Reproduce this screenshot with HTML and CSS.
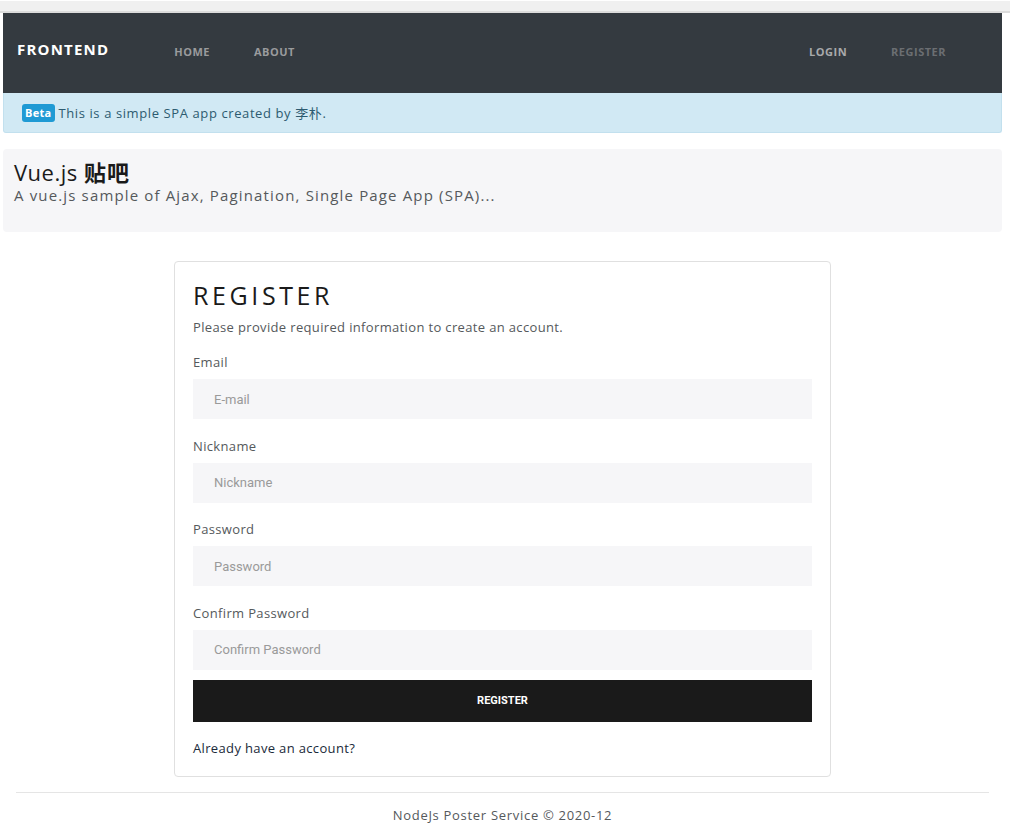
FILE: index.html
```html
<!DOCTYPE html>
<html>
<head>
<meta charset="utf-8">
<link rel="stylesheet" href="styles.css">
</head>
<body>
<div class="topstrip"></div>
<div class="page">
  <nav class="navbar">
    <a class="brand">FRONTEND</a>
    <div class="nav-left">
      <a class="nav-link">HOME</a>
      <a class="nav-link">ABOUT</a>
    </div>
    <div class="nav-right">
      <a class="nav-link login">LOGIN</a>
      <a class="nav-link active">REGISTER</a>
    </div>
  </nav>
  <div class="alert"><span class="badge">Beta</span> This is a simple SPA app created by 李朴.</div>
  <div class="jumbo">
    <h1 class="jumbo-title">Vue.js <b>贴吧</b></h1>
    <p class="jumbo-sub">A vue.js sample of Ajax, Pagination, Single Page App (SPA)...</p>
  </div>
  <div class="card-wrap">
    <div class="card">
      <h2 class="card-title">REGISTER</h2>
      <p class="card-sub">Please provide required information to create an account.</p>
      <label class="field">
        <span class="label">Email</span>
        <input class="input" placeholder="E-mail">
      </label>
      <label class="field">
        <span class="label">Nickname</span>
        <input class="input" placeholder="Nickname">
      </label>
      <label class="field">
        <span class="label">Password</span>
        <input class="input" type="password" placeholder="Password">
      </label>
      <label class="field">
        <span class="label">Confirm Password</span>
        <input class="input" type="password" placeholder="Confirm Password">
      </label>
      <button class="btn">REGISTER</button>
      <a class="already">Already have an account?</a>
    </div>
  </div>
  <footer class="footer">NodeJs Poster Service © 2020-12</footer>
</div>
</body>
</html>
```
FILE: styles.css
```css
* { box-sizing: border-box; }
html, body { margin: 0; padding: 0; background: #fff; }
body {
  font-family: "Open Sans", "Noto Sans CJK SC", sans-serif;
  color: #55595c;
}
.topstrip {
  height: 12px;
  margin-top: 1px;
  width: 1010px;
  background: #f0f0f0;
  border-bottom: 2px solid #dcdcdc;
}
.page {
  width: 999px;
  margin-left: 3px;
}
.navbar {
  height: 80px;
  background: #343a40;
  display: flex;
  align-items: center;
  padding: 0 14px;
}
.brand {
  font-weight: 700;
  font-size: 15px;
  letter-spacing: 1.2px;
  color: #fff;
  margin-top: -9px;
}
.nav-left { display: flex; gap: 44px; margin-left: 65px; margin-top: -4px; }
.nav-right { display: flex; gap: 44px; margin-left: auto; margin-right: 42px; margin-top: -4px; }
.nav-link {
  font-size: 11px;
  font-weight: 700;
  letter-spacing: 0.5px;
  color: #9a9b9d;
}
.nav-link.login { color: #a8a9ab; }
.nav-link.active { color: #6b6e72; }
.alert {
  height: 40px;
  background: #d1e9f4;
  border: 1px solid #c2e0ee;
  border-top: none;
  border-radius: 0 0 3px 3px;
  display: flex;
  align-items: center;
  padding-left: 18px;
  font-size: 13px;
  color: #2d5b70;
  letter-spacing: 0.6px;
  white-space: pre;
}
.badge {
  background: #1f9ad4;
  color: #fff;
  font-weight: 700;
  font-size: 11px;
  padding: 1px 3px 2px;
  border-radius: 3px;
  letter-spacing: 0.3px;
}
.jumbo {
  margin-top: 16px;
  height: 83px;
  background: #f6f6f8;
  border-radius: 4px;
  padding: 9px 11px;
}
.jumbo-title {
  margin: 0;
  font-size: 22px;
  font-weight: 400;
  color: #1a1a1a;
  line-height: 28px;
  letter-spacing: 0.5px;
}
.jumbo-title b { font-weight: 700; letter-spacing: 1px; }
.jumbo-sub {
  margin: 0;
  font-size: 15px;
  letter-spacing: 1.15px;
  line-height: 18px;
  color: #55595c;
}
.card-wrap {
  display: flex;
  justify-content: center;
  margin-top: 29px;
}
.card {
  width: 657px;
  border: 1px solid #e0e0e0;
  border-radius: 4px;
  padding: 18px 18px 20px;
  display: flex;
  flex-direction: column;
}
.card-title {
  margin: 0;
  font-size: 25px;
  font-weight: 400;
  letter-spacing: 3.6px;
  color: #1a1a1a;
  line-height: 30px;
}
.card-sub {
  margin: 9px 0 0;
  font-size: 13px;
  letter-spacing: 0.35px;
  color: #55595c;
  line-height: 16px;
}
.field {
  display: flex;
  flex-direction: column;
  margin-top: 19px;
}
.field + .field { margin-top: 18.5px; }
.label {
  font-size: 13px;
  letter-spacing: 0.35px;
  line-height: 16px;
  color: #55595c;
  margin-bottom: 9px;
}
.input {
  height: 40px;
  border: none;
  background: #f6f6f8;
  padding: 0 21px;
  font-family: Roboto, "Liberation Sans", sans-serif;
  font-size: 13px;
  outline: none;
}
.input::placeholder { color: #9a9a9a; }
.btn {
  margin-top: 10px;
  height: 42px;
  border: none;
  background: #1a1a1a;
  color: #fff;
  font-family: Roboto, "Liberation Sans", sans-serif;
  font-weight: 700;
  font-size: 11px;
  letter-spacing: 0;
}
.already {
  margin-top: 18px;
  font-size: 13px;
  letter-spacing: 0.35px;
  color: #1a2a3a;
  line-height: 16px;
}
.footer {
  margin: 15px 13px 0;
  border-top: 1px solid #e5e5e5;
  text-align: center;
  padding-top: 13px;
  font-size: 13px;
  letter-spacing: 0.7px;
  color: #55595c;
}
```
